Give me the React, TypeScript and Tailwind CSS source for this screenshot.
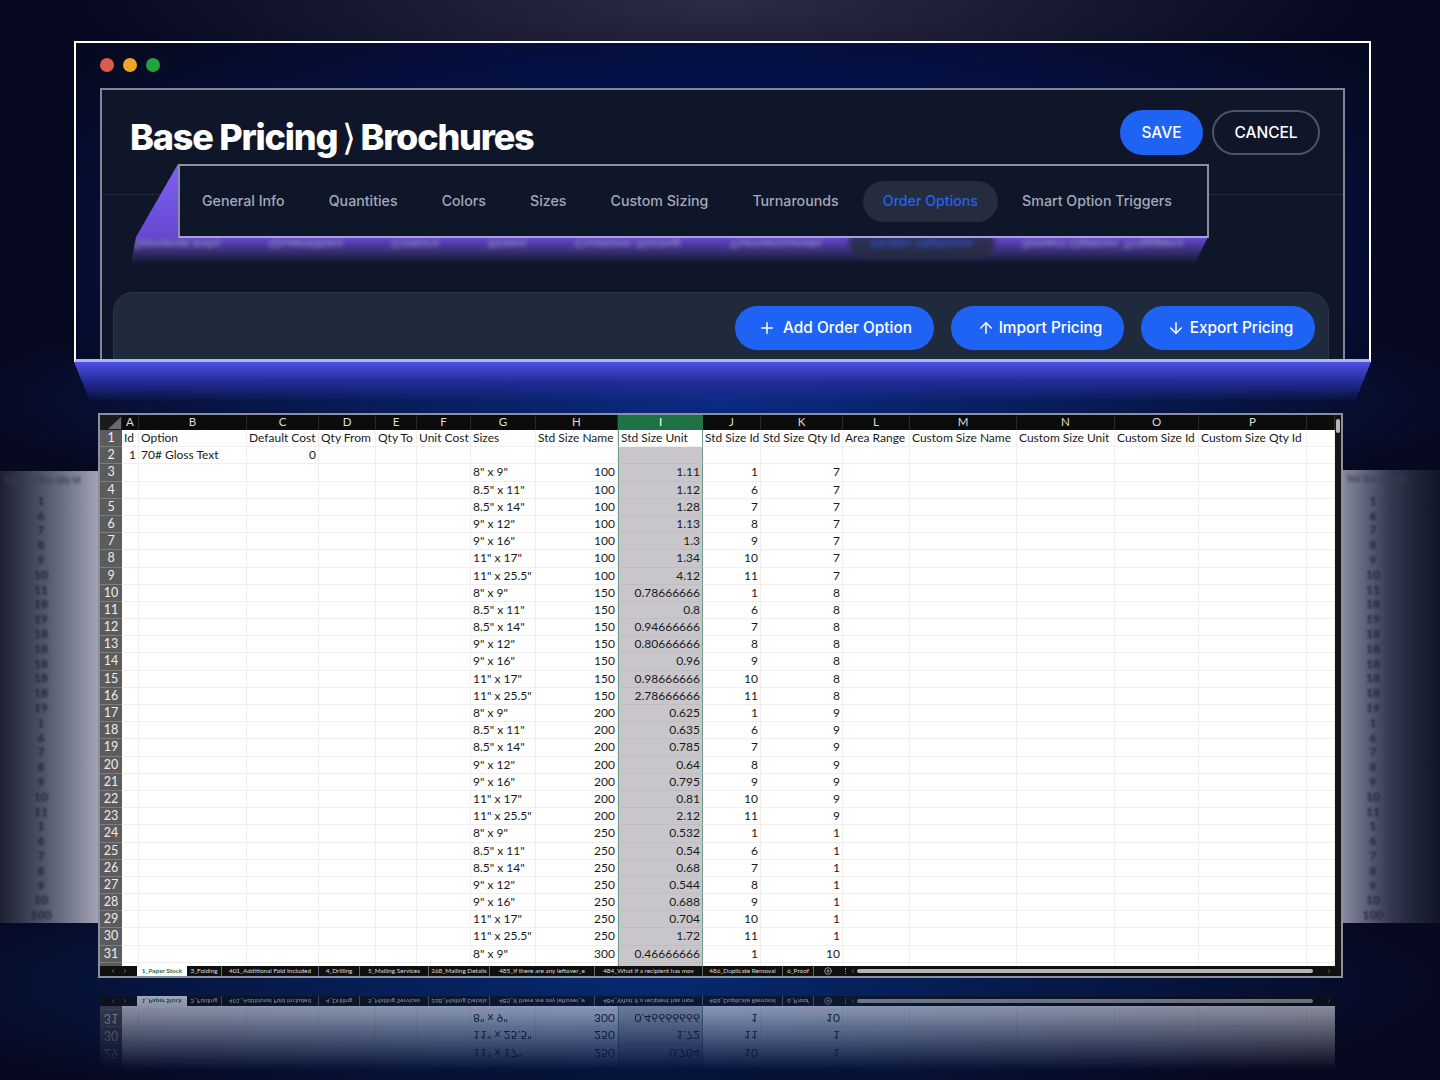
// Base pricing promo shot: app window on top, spreadsheet and reflections below
import { Plus, ArrowUp, ArrowDown, CirclePlus, ChevronLeft, ChevronRight } from 'lucide-react'

const TABS = ['General Info', 'Quantities', 'Colors', 'Sizes', 'Custom Sizing', 'Turnarounds', 'Order Options', 'Smart Option Triggers']

const COLS = ['A', 'B', 'C', 'D', 'E', 'F', 'G', 'H', 'I', 'J', 'K', 'L', 'M', 'N', 'O', 'P', '']
const HEADERS = ['Id', 'Option', 'Default Cost', 'Qty From', 'Qty To', 'Unit Cost', 'Sizes', 'Std Size Name', 'Std Size Unit', 'Std Size Id', 'Std Size Qty Id', 'Area Range', 'Custom Size Name', 'Custom Size Unit', 'Custom Size Id', 'Custom Size Qty Id', '']

const GRID = 'grid grid-cols-[22px_17px_108px_72px_57px_41px_54px_65px_82px_85px_58px_82px_67px_107px_98px_84px_108px_28px] h-[17.2px]'

const SIZES = ['8" x 9"', '8.5" x 11"', '8.5" x 14"', '9" x 12"', '9" x 16"', '11" x 17"', '11" x 25.5"']
const SIZE_IDS = ['1', '6', '7', '8', '9', '10', '11']

const GROUPS = [
  { qty: '100', id: '7', units: ['1.11', '1.12', '1.28', '1.13', '1.3', '1.34', '4.12'] },
  { qty: '150', id: '8', units: ['0.78666666', '0.8', '0.94666666', '0.80666666', '0.96', '0.98666666', '2.78666666'] },
  { qty: '200', id: '9', units: ['0.625', '0.635', '0.785', '0.64', '0.795', '0.81', '2.12'] },
  { qty: '250', id: '1', units: ['0.532', '0.54', '0.68', '0.544', '0.688', '0.704', '1.72'] },
]

interface DataRow {
  n: number
  size: string
  qty: string
  unit: string
  sizeId: string
  qtyId: string
}

const DATA: DataRow[] = []
GROUPS.forEach((g, gi) => {
  g.units.forEach((unit, i) => {
    DATA.push({ n: 3 + gi * 7 + i, size: SIZES[i], qty: g.qty, unit, sizeId: SIZE_IDS[i], qtyId: g.id })
  })
})
DATA.push({ n: 31, size: SIZES[0], qty: '300', unit: '0.46666666', sizeId: '1', qtyId: '10' })

const SHEET_TABS = [
  { name: '3_Folding', w: 'w-[35px]' },
  { name: '401_Additional Fold Included', w: 'w-[97px]' },
  { name: '4_Drilling', w: 'w-[41px]' },
  { name: '5_Mailing Services', w: 'w-[69px]' },
  { name: '268_Mailing Details', w: 'w-[61px]' },
  { name: '485_If there are any leftover_e', w: 'w-[105px]' },
  { name: '484_What if a recipient has mov', w: 'w-[108px]' },
  { name: '486_Duplicate Removal', w: 'w-[80px]' },
  { name: '6_Proof', w: 'w-[31px]' },
]

function Tabs() {
  return (
    <div className="flex items-center h-full pl-[2px] gap-[4.1px] text-[14.2px] font-medium [font-family:Inter,sans-serif]">
      {TABS.map(t => (
        <div
          key={t}
          className={t === 'Order Options'
            ? 'h-[41px] flex items-center px-[20px] rounded-full bg-[#252c3d] text-[#2563eb]'
            : 'h-[41px] flex items-center px-[20px] text-[#a3a9b8]'}
        >
          {t}
        </div>
      ))}
    </div>
  )
}

function Cell({ text, right, sel, edge }: { text?: string; right?: boolean; sel?: boolean; edge?: boolean }) {
  return (
    <div
      className={`h-full whitespace-nowrap px-[2px] leading-[16px] text-[12px] text-[#1a1a1a] border-b border-r ${
        right ? 'text-right' : 'text-left'
      } ${sel ? 'bg-[#c8c6cb] border-[#c0bec3]' : 'border-[#efefef]'} ${
        edge ? 'border-l border-l-[#6b9c86] border-r-[#6b9c86]' : ''
      }`}
    >
      {text}
    </div>
  )
}

function RowHead({ n }: { n: number }) {
  return (
    <div className="h-full bg-[#5c5c5c] border-b border-[#7d7d7d] text-center text-[12.5px] leading-[16px] text-[#ececec]">
      {n}
    </div>
  )
}

function SheetRow({ row }: { row: DataRow }) {
  const cells = Array.from({ length: 17 }, () => '')
  cells[6] = row.size
  cells[7] = row.qty
  cells[8] = row.unit
  cells[9] = row.sizeId
  cells[10] = row.qtyId
  return (
    <div className={GRID}>
      <RowHead n={row.n} />
      {cells.map((c, i) => (
        <Cell key={i} text={c} right={i !== 6} sel={i === 8} edge={i === 8} />
      ))}
    </div>
  )
}

// Row 32 only shows as a sliver of empty cells above the tab bar
function CutRow() {
  return (
    <div className={GRID}>
      <div className="h-full bg-[#5c5c5c]" />
      {COLS.map((_, i) => (
        <Cell key={i} sel={i === 8} edge={i === 8} />
      ))}
    </div>
  )
}

function TabBar() {
  return (
    <div className="flex items-center h-[10px] shrink-0 bg-[#101010] text-[6.4px] leading-[10px] text-[#dedede] [font-family:Lato,sans-serif]">
      <div className="w-[37px] flex justify-center gap-[6px] text-[#bbb]">
        <ChevronLeft size={6} />
        <ChevronRight size={6} />
      </div>
      <div className="w-[50px] h-full bg-white text-[#1f7246] font-bold text-center">1_Paper Stock</div>
      {SHEET_TABS.map(t => (
        <div key={t.name} className={`${t.w} text-center whitespace-nowrap border-r border-[#666]`}>
          {t.name}
        </div>
      ))}
      <div className="w-[28px] flex justify-center text-[#ccc]">
        <CirclePlus size={8} />
      </div>
      <div className="ml-[3px] w-[5px] h-[6px] border-l border-dotted border-[#888]" />
      <div className="w-[7px] text-[#bbb]">
        <ChevronLeft size={6} />
      </div>
      <div className="w-[456px] h-[4px] rounded-full bg-[#b5b5b5]" />
      <div className="ml-[13px] text-[#bbb]">
        <ChevronRight size={6} />
      </div>
    </div>
  )
}

function SideGhost({ values }: { values: string[] }) {
  return (
    <div className="flex flex-col items-center blur-[1.2px] text-[12px] leading-[14.8px] font-bold text-[#22263a] [font-family:Lato,sans-serif]">
      {values.map((v, i) => (
        <span key={i}>{v}</span>
      ))}
    </div>
  )
}

const GHOST = ['1', '6', '7', '8', '9', '10', '11', '18', '19', '18', '18', '18', '18', '18', '19', '1', '6', '7', '8', '9', '10', '11', '1', '6', '7', '8', '9', '10', '100']

export default function App() {
  return (
    <div className="relative w-[1440px] h-[1080px] overflow-hidden flex flex-col pt-[41px] [font-family:Inter,sans-serif] bg-[#060920] bg-[radial-gradient(ellipse_640px_120px_at_50%_0px,#2a2d44,transparent),radial-gradient(ellipse_800px_130px_at_45%_985px,#062a72,transparent),radial-gradient(ellipse_760px_120px_at_50%_400px,#0a2c86,transparent)]">

      {/* Side reflections behind the sheet */}
      <div className="absolute left-0 top-[471px] w-[98px] h-[452px] bg-gradient-to-r from-[#1c2032] via-[#565c72] to-[#a2a4b4] flex flex-col">
        <div className="h-[28px] pt-[2px] pl-[4px] whitespace-nowrap blur-[1.4px] text-[9px] font-bold text-[#3a3e52] [font-family:Lato,sans-serif]">
          Custom Size Qty Id
        </div>
        <div className="w-[82px] flex justify-center">
          <SideGhost values={GHOST} />
        </div>
      </div>
      <div className="absolute right-0 top-[470px] w-[97px] h-[453px] bg-gradient-to-r from-[#858a9f] via-[#33384f] to-[#0f1426] flex flex-col">
        <div className="h-[28px] pt-[2px] pl-[4px] whitespace-nowrap blur-[1.4px] text-[9px] font-bold text-[#3a3e52] [font-family:Lato,sans-serif]">
          Std Size Qty Id
        </div>
        <div className="w-[60px] flex justify-center">
          <SideGhost values={GHOST} />
        </div>
      </div>

      {/* App window */}
      <div className="relative z-10 ml-[74px] w-[1297px] h-[321px] shrink-0 border-2 border-white border-b-[3px] border-b-[#a9b4f5] overflow-hidden flex flex-col pt-[15px] pl-[24px] bg-[#060a20] bg-[radial-gradient(ellipse_800px_300px_at_50%_200px,#03187a,transparent)]">
        <div className="flex gap-[9px] shrink-0">
          <span className="w-[14px] h-[14px] rounded-full bg-[#dd5a4e]" />
          <span className="w-[14px] h-[14px] rounded-full bg-[#eda627]" />
          <span className="w-[14px] h-[14px] rounded-full bg-[#22a13f]" />
        </div>

        <div className="relative mt-[16px] w-[1245px] flex-1 border-2 border-b-0 border-[#7f8799] bg-[#0f1629]">
          <div className="absolute inset-x-0 top-[104px] h-px bg-[#232b3d]" />

          {/* Title row */}
          <div className="flex items-start justify-between h-[74px] pl-[28px] pr-[23px]">
            <h1 className="mt-[26px] text-[36px] leading-[42px] font-extrabold tracking-[-1.2px] text-white whitespace-nowrap">
              Base Pricing <span className="font-light -mx-[1.5px]">⟩</span> Brochures
            </h1>
            <div className="flex gap-[9px] pt-[20px]">
              <button className="w-[83px] h-[45px] rounded-full bg-[#1f63f5] text-white text-[15.5px] font-medium">SAVE</button>
              <button className="w-[108px] h-[45px] rounded-full border-2 border-[#4b5468] text-white text-[15.5px] font-medium">CANCEL</button>
            </div>
          </div>

          {/* Tab strip, with its purple wedge and blurred reflection */}
          <div className="relative ml-[76px] w-[1031px] h-[74px]">
            <div className="absolute left-[-48px] top-0 w-[1078px] h-[100px] overflow-hidden bg-gradient-to-b from-[#7f62f5] via-[#6547cf] via-[74%] to-[#0f1629] [clip-path:polygon(48px_0,1078px_0,1078px_73px,1065px_99px,1px_99px,6px_73px)]">
              <div className="absolute left-[48px] top-[-22px] w-[1031px] h-[74px] origin-[830px_100%] [transform:scale(1.085,-0.75)] blur-[2.5px] opacity-80">
                <Tabs />
              </div>
            </div>
            <div className="relative h-full border-2 border-[#8a90a3] border-b-[#a99fe0] bg-[#0f1629]">
              <Tabs />
            </div>
          </div>

          {/* Card peeking in at the bottom */}
          <div className="mt-[54px] ml-[11px] w-[1216px] h-[80px] rounded-t-[20px] border border-[#2d3648] bg-[#1f2a3d] flex justify-end gap-[17px] pr-[13px] pt-[13px] text-[15.4px]">
            <button className="w-[199px] h-[44px] rounded-full bg-[#1f63f5] text-white font-medium flex items-center justify-center gap-[7px] pl-[1px]">
              <Plus size={18} />
              Add Order Option
            </button>
            <button className="w-[173px] h-[44px] rounded-full bg-[#1f63f5] text-white font-medium flex items-center justify-center gap-[4px] pl-[4px]">
              <ArrowUp size={18} />
              Import Pricing
            </button>
            <button className="w-[174px] h-[44px] rounded-full bg-[#1f63f5] text-white font-medium flex items-center justify-center gap-[5px] pl-[4px]">
              <ArrowDown size={18} />
              Export Pricing
            </button>
          </div>
        </div>
      </div>

      {/* Purple skirt under the window */}
      <div className="ml-[74px] w-[1297px] h-[51px] shrink-0 bg-gradient-to-b from-[#5050e4] via-[#232c98] via-[38%] to-transparent to-[78%] [clip-path:polygon(0_0,100%_0,98.4%_100%,1.6%_100%)]" />

      {/* Spreadsheet */}
      <div className="relative z-10 ml-[98px] w-[1245px] h-[565px] shrink-0 border-2 border-[#8b90a0] bg-white flex flex-col [font-family:Lato,sans-serif]">
        <div className="flex h-[551px] overflow-hidden">
          <div className="w-[1235px] overflow-hidden">
            <div className="grid grid-cols-[22px_17px_108px_72px_57px_41px_54px_65px_82px_85px_58px_82px_67px_107px_98px_84px_108px_28px] h-[15px] bg-[#0c0c0c] text-[11.5px] leading-[13px] text-[#dcdcdc] text-center">
              <div className="relative bg-[#1b1b1b]">
                <div className="absolute right-[1px] bottom-[1px] w-[13px] h-[12px] bg-[#6a6a6a] [clip-path:polygon(100%_0,100%_100%,0_100%)]" />
              </div>
              {COLS.map((c, i) => (
                <div key={i} className={c === 'I' ? 'bg-[#1f7246] text-white' : 'border-r border-[#2a2a2a]'}>
                  {c}
                </div>
              ))}
            </div>
            <div className={GRID}>
              <RowHead n={1} />
              {HEADERS.map((h, i) => (
                <Cell key={i} text={h} edge={i === 8} />
              ))}
            </div>
            <div className={GRID}>
              <RowHead n={2} />
              {HEADERS.map((_, i) => (
                <Cell
                  key={i}
                  text={i === 0 ? '1' : i === 1 ? '70# Gloss Text' : i === 2 ? '0' : ''}
                  right={i !== 1}
                  sel={i === 8}
                  edge={i === 8}
                />
              ))}
            </div>
            {DATA.map(r => (
              <SheetRow key={r.n} row={r} />
            ))}
            <CutRow />
          </div>
          <div className="flex-1 bg-[#141414] flex flex-col items-center pt-[4px]">
            <div className="w-[4px] h-[14px] rounded-full bg-[#b5b5b5]" />
          </div>
        </div>
        <TabBar />
      </div>

      {/* Floor reflection of the sheet */}
      <div className="ml-[100px] w-[1235px] h-[84px] mt-[18px] shrink-0 overflow-hidden [mask-image:linear-gradient(to_bottom,rgba(0,0,0,0.62),transparent_88%)] [font-family:Lato,sans-serif]">
        <div className="h-[84px] flex flex-col justify-end -scale-y-100 bg-white">
          {DATA.slice(25, 29).map(r => (
            <SheetRow key={r.n} row={r} />
          ))}
          <div className="h-[3px] shrink-0 overflow-hidden">
            <CutRow />
          </div>
          <TabBar />
        </div>
      </div>
    </div>
  )
}
